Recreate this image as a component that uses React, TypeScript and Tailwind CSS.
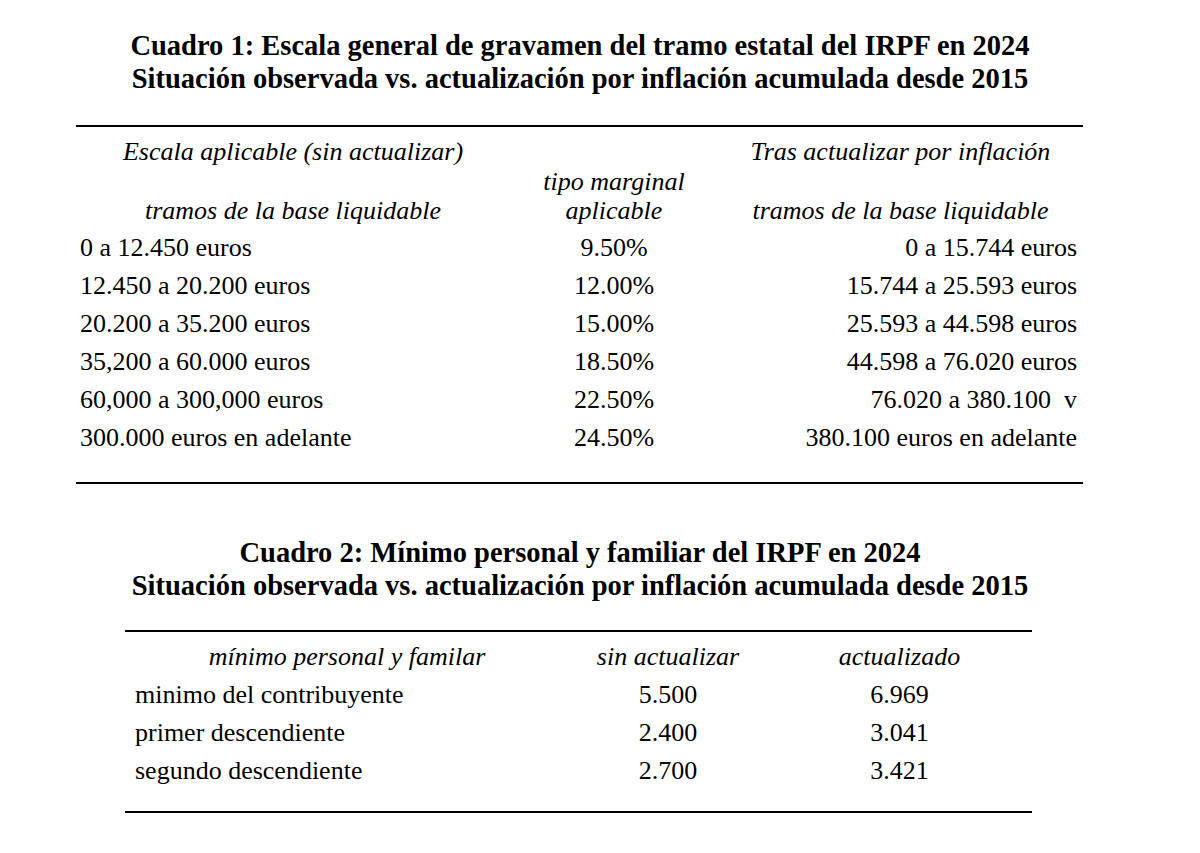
const rows1 = [
  ["0 a 12.450 euros", "9.50%", "0 a 15.744 euros"],
  ["12.450 a 20.200 euros", "12.00%", "15.744 a 25.593 euros"],
  ["20.200 a 35.200 euros", "15.00%", "25.593 a 44.598 euros"],
  ["35,200 a 60.000 euros", "18.50%", "44.598 a 76.020 euros"],
  ["60,000 a 300,000 euros", "22.50%", "76.020 a 380.100  v"],
  ["300.000 euros en adelante", "24.50%", "380.100 euros en adelante"],
];

const rows2 = [
  ["minimo del contribuyente", "5.500", "6.969"],
  ["primer descendiente", "2.400", "3.041"],
  ["segundo descendiente", "2.700", "3.421"],
];

function Title({ line1, line2 }: { line1: string; line2: string }) {
  return (
    <div className="pr-[40px] text-center text-[28.5px] font-bold leading-[33px] text-black">
      <div>{line1}</div>
      <div>{line2}</div>
    </div>
  );
}

export default function App() {
  return (
    <div className="min-h-[853px] w-[1200px] bg-white font-['Liberation_Serif','Times_New_Roman',serif] text-black">
      <div className="pt-[29px]">
        <Title
          line1="Cuadro 1: Escala general de gravamen del tramo estatal del IRPF en 2024"
          line2="Situación observada vs. actualización por inflación acumulada desde 2015"
        />
      </div>

      {/* Cuadro 1 */}
      <div className="ml-[76px] mt-[30px] w-[1007px] border-t-2 border-b-2 border-black pt-[10px] pb-[25px] text-[26px]">
        <div className="grid grid-cols-[434px_208px_365px] italic leading-[29.5px]">
          <div className="text-center">
            <div>Escala aplicable (sin actualizar)</div>
            <div>&nbsp;</div>
            <div>tramos de la base liquidable</div>
          </div>
          <div className="text-center">
            <div>&nbsp;</div>
            <div>tipo marginal</div>
            <div>aplicable</div>
          </div>
          <div className="text-center">
            <div>Tras actualizar por inflación</div>
            <div>&nbsp;</div>
            <div>tramos de la base liquidable</div>
          </div>
        </div>
        <div className="mt-[3px]">
          {rows1.map((r) => (
            <div key={r[0]} className="grid grid-cols-[434px_208px_365px] leading-[38px]">
              <div className="pl-[4px] whitespace-pre">{r[0]}</div>
              <div className="text-center">{r[1]}</div>
              <div className="pr-[6px] text-right whitespace-pre">{r[2]}</div>
            </div>
          ))}
        </div>
      </div>

      <div className="mt-[52px]">
        <Title
          line1="Cuadro 2: Mínimo personal y familiar del IRPF en 2024"
          line2="Situación observada vs. actualización por inflación acumulada desde 2015"
        />
      </div>

      {/* Cuadro 2 */}
      <div className="ml-[125px] mt-[28px] w-[907px] border-t-2 border-b-2 border-black pt-[6px] pb-[21px] text-[26px]">
        <div className="grid grid-cols-[444px_198px_265px] italic leading-[38px]">
          <div className="text-center">mínimo personal y familar</div>
          <div className="text-center">sin actualizar</div>
          <div className="text-center">actualizado</div>
        </div>
        {rows2.map((r) => (
          <div key={r[0]} className="grid grid-cols-[444px_198px_265px] leading-[38px]">
            <div className="pl-[10px]">{r[0]}</div>
            <div className="text-center">{r[1]}</div>
            <div className="text-center">{r[2]}</div>
          </div>
        ))}
      </div>
    </div>
  );
}
